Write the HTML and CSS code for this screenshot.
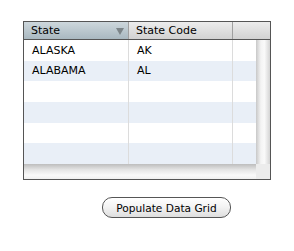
FILE: index.html
```html
<!DOCTYPE html>
<html lang="en">
<head>
    <meta charset="UTF-8">
    <title>DataGrid</title>
    <link rel="stylesheet" href="styles.css">
</head>
<body>

<div class="grid">
    <div class="header">
        <div class="hcell sorted">State <span class="arrow"></span></div>
        <div class="hcell">State Code</div>
        <div class="hcell last"></div>
    </div>
    <div class="middle">
        <div class="rows">
            <div class="row"><div class="cell">ALASKA</div><div class="cell">AK</div><div class="cell last"></div></div>
            <div class="row alt"><div class="cell">ALABAMA</div><div class="cell">AL</div><div class="cell last"></div></div>
            <div class="row"><div class="cell"></div><div class="cell"></div><div class="cell last"></div></div>
            <div class="row alt"><div class="cell"></div><div class="cell"></div><div class="cell last"></div></div>
            <div class="row"><div class="cell"></div><div class="cell"></div><div class="cell last"></div></div>
            <div class="row alt"><div class="cell"></div><div class="cell"></div><div class="cell last"></div></div>
        </div>
        <div class="vscroll"></div>
        <div class="hscroll"></div>
        <div class="corner"></div>
    </div>
</div>

<div class="actions">
    <button class="populate">Populate Data Grid</button>
</div>

</body>
</html>
```

FILE: styles.css
```css
body {
    margin: 0;
    padding: 21px 0 0 23px;
    background-color: #fff;
    font-family: "DejaVu Sans", Verdana, sans-serif;
    font-size: 11px;
    color: #000;
}
.grid {
    width: 246px;
    border: 1px solid #555;
}
.header {
    display: grid;
    grid-template-columns: 105px 104px 37px;
    height: 17px;
    border-bottom: 1px solid #555;
    background: linear-gradient(#ececec, #d2d2d2);
}
.hcell {
    display: flex;
    align-items: center;
    justify-content: space-between;
    padding: 0 4px 0 7px;
    border-right: 1px solid #a0a0a0;
}
.hcell.last {
    border-right: none;
}
.sorted {
    background: linear-gradient(#cdd7dc, #a9b8c0);
}
.arrow {
    width: 0;
    height: 0;
    border-left: 4px solid transparent;
    border-right: 4px solid transparent;
    border-top: 7px solid #7c8488;
    margin-top: 1px;
}
.middle {
    display: grid;
    grid-template-columns: 232px 14px;
    grid-template-rows: 124px 15px;
}
.rows {
    display: grid;
    grid-template-rows: repeat(6, 1fr);
}
.row {
    display: grid;
    grid-template-columns: 105px 104px 23px;
}
.row.alt {
    background-color: #e9eff7;
}
.cell {
    display: flex;
    align-items: center;
    padding-left: 8px;
    border-right: 1px solid #dcdcdc;
}
.cell.last {
    border-right: none;
}
.vscroll {
    background: linear-gradient(to right, #c8c8c8, #f4f4f4 35%, #fafafa 60%, #d4d4d4);
}
.hscroll {
    background: linear-gradient(#bdbdbd, #e6e6e6 40%, #fafafa 75%, #f0f0f0);
}
.corner {
    background-color: #ececec;
}
.actions {
    margin: 17px 0 0 79px;
}
.populate {
    width: 129px;
    height: 21px;
    padding: 0;
    font-family: "DejaVu Sans", Verdana, sans-serif;
    font-size: 10.6px;
    color: #000;
    border: 1px solid #555;
    border-radius: 10px;
    background: linear-gradient(#ffffff, #f2f2f2 50%, #dedede);
    box-shadow: inset 0 1px 0 #fff;
}
```
